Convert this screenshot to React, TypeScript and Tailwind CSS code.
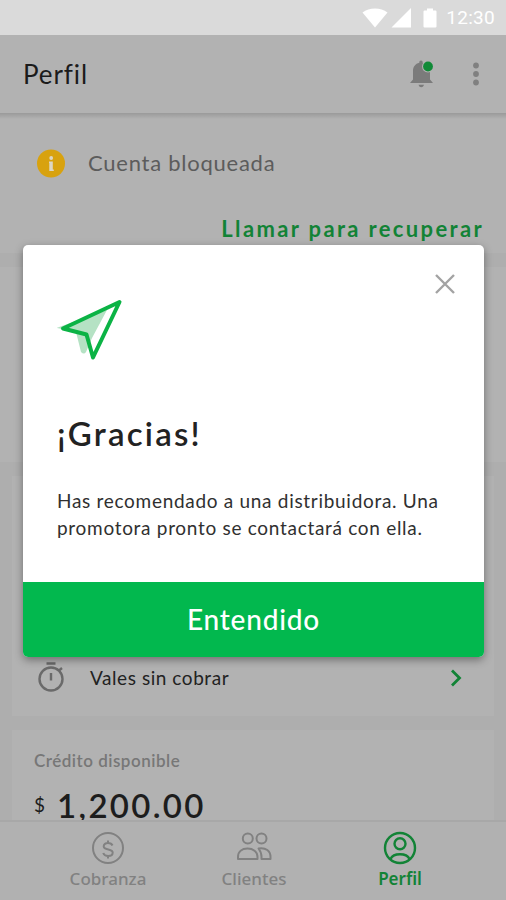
import type { ReactNode } from 'react';

interface NavItemProps {
  icon: ReactNode;
  label: string;
  className: string;
}

function StatusBar() {
  return (
    <div className="flex h-[35px] shrink-0 items-center justify-end bg-[#dadada] pr-[11px] text-white">
      <svg className="mr-[3px] h-[20px] w-[26px]" viewBox="0 0 26 20" fill="currentColor">
        <path d="M0.5 4.5C4 1.7 8.200 0.500 13 0.500S22 1.700 25.500 4.500L13 19.500Z" />
      </svg>
      <svg className="mr-[12px] h-[20px] w-[20px]" viewBox="0 0 20 20" fill="currentColor">
        <path d="M20 0V19.500H0.500Z" />
      </svg>
      <svg className="mr-[9px] h-[20px] w-[14px]" viewBox="0 0 14 20" fill="currentColor">
        <path d="M4 0.500H10V2.500H12.500Q13.500 2.500 13.500 3.500V18.500Q13.500 19.500 12.500 19.500H1.500Q0.500 19.500 0.500 18.500V3.500Q0.500 2.500 1.500 2.500H4Z" />
      </svg>
      <span className="font-['Roboto',sans-serif] text-[19px] leading-none tracking-[0.3px]">12:30</span>
    </div>
  );
}

function Header() {
  return (
    <header className="relative z-10 flex h-[78px] shrink-0 items-center bg-[#b2b2b2] pr-[23px] pl-[23px]">
      <div className="absolute inset-x-0 top-full h-[6px] bg-linear-to-b from-[#9a9a9a] to-[#b2b2b2]" />
      <h1 className="flex-1 text-[26px] leading-none tracking-[0.9px] text-[#1b1b1b]">Perfil</h1>
      <svg className="mr-[34px] h-[30px] w-[26px]" viewBox="0 0 26 30">
        <path
          d="M12 1.500C10.800 1.500 10.300 2.400 10.300 3.700C6.300 4.700 4 7.700 4 12V20.500L1 24H24L21 20.500V12C21 7.700 18 4.700 13.700 3.700C13.700 2.400 13.200 1.500 12 1.500Z"
          fill="#7b7b7b"
        />
        <path d="M9.500 25.800H15C14.500 27.500 13.500 28.300 12.200 28.300S10 27.500 9.500 25.800Z" fill="#7b7b7b" />
        <circle cx="19" cy="7.500" r="6" fill="#b2b2b2" />
        <circle cx="19" cy="7.500" r="4.900" fill="#108a37" />
      </svg>
      <svg className="h-[26px] w-[14px]" viewBox="0 0 14 26" fill="#808080">
        <circle cx="7" cy="4.500" r="2.900" />
        <circle cx="7" cy="13" r="2.900" />
        <circle cx="7" cy="21.500" r="2.900" />
      </svg>
    </header>
  );
}

function BlockedAccount() {
  return (
    <section className="h-[140px] shrink-0 bg-[#b2b2b2] pt-[35px]">
      <div className="flex h-[30px] items-center pl-[36px]">
        <svg className="mr-[22px] h-[30px] w-[30px]" viewBox="0 0 30 30">
          <circle cx="15" cy="15.500" r="14" fill="#d8a20f" />
          <circle cx="15.200" cy="10" r="1.900" fill="#dcd6c4" />
          <path d="M13 13.500H16.800V21.500H17.800V23H13.300V15H13Z" fill="#dcd6c4" />
        </svg>
        <span className="text-[22px] leading-none tracking-[0.75px] text-[#5c5c5c]">Cuenta bloqueada</span>
      </div>
      <div className="mt-[39px] pr-[22px] text-right text-[22px] leading-[24px] font-bold tracking-[2.35px] text-[#128336]">
        Llamar para recuperar
      </div>
    </section>
  );
}

function NavItem({ icon, label, className }: NavItemProps) {
  return (
    <div className={`flex w-[146px] flex-col items-center ${className}`}>
      {icon}
      <span className="mt-[2px] font-['Noto_Sans',sans-serif] text-[17px] leading-[24px]">{label}</span>
    </div>
  );
}

function BottomNav() {
  return (
    <nav className="absolute inset-x-0 bottom-0 flex h-[80px] border-t-2 border-[#a8a8a8] bg-[#b1b1b1] pt-[9px] pl-[35px]">
      <NavItem
        label="Cobranza"
        className="font-medium text-[#818181]"
        icon={
          <svg className="h-[34px] w-[34px]" viewBox="0 0 34 34" fill="none" stroke="currentColor" strokeWidth="2">
            <circle cx="17" cy="17" r="15" />
            <path d="M21.500 14.500C20.800 12.800 19.200 12 17 12C14.500 12 12.700 13.200 12.700 15.200C12.700 19.800 21.700 17.200 21.700 21.500C21.700 23.700 19.700 25 17.200 25C14.700 25 12.900 24 12.200 22M17 9.500V12M17 25V27.500" />
          </svg>
        }
      />
      <NavItem
        label="Clientes"
        className="font-medium text-[#818181]"
        icon={
          <svg className="h-[34px] w-[38px]" viewBox="0 0 38 34" fill="none" stroke="currentColor" strokeWidth="2">
            <circle cx="12.800" cy="7.500" r="5" />
            <circle cx="26.500" cy="7.500" r="5" />
            <path d="M3 28V26C3 20.500 7 17.500 12.500 17.500S22.500 20.500 22.500 26V28Z" strokeLinejoin="round" />
            <path d="M23.500 17.500C31 16.300 35.500 20 35.500 26V28H26.500V26C26.500 22.500 25.500 20 23.500 17.500Z" strokeLinejoin="round" />
          </svg>
        }
      />
      <NavItem
        label="Perfil"
        className="font-semibold text-[#128336]"
        icon={
          <svg className="h-[34px] w-[34px]" viewBox="0 0 34 34" fill="none" stroke="currentColor" strokeWidth="2.400">
            <circle cx="17" cy="17" r="15" />
            <circle cx="17" cy="12.800" r="5.500" />
            <path d="M7.500 28C9 24.800 12.500 23.200 17 23.200S25 24.800 26.500 28" />
          </svg>
        }
      />
    </nav>
  );
}

function ThanksDialog() {
  return (
    <div className="absolute inset-0 z-20 flex items-center pt-[2px] pr-[22px] pl-[23px]">
      <div className="flex h-[412px] w-full flex-col overflow-hidden rounded-[5px] bg-white shadow-[0_3px_8px_rgba(0,0,0,0.38)]">
        <div className="flex flex-1 flex-col pl-[34px]">
          <div className="flex h-[116px] justify-between">
            <svg className="mt-[53px] h-[64px] w-[68px]" viewBox="0 0 68 64">
              <path d="M-0.500 30L50 12L35 40L29 54Q27 57 24 54L19 34Z" fill="#b5e2c4" />
              <path d="M62.500 4L6 30.500L29.500 36.500L36 59.500Z" fill="none" stroke="#0bb345" strokeWidth="4" strokeLinejoin="round" />
            </svg>
            <svg className="mt-[29px] mr-[29px] h-[20px] w-[20px]" viewBox="0 0 20 20" stroke="#a3a3a3" strokeWidth="2.400">
              <path d="M1 1L19 19M19 1L1 19" />
            </svg>
          </div>
          <h2 className="mt-[52px] text-[33px] leading-[40px] font-semibold tracking-[2.200px] text-[#222]">¡Gracias!</h2>
          <p className="mt-[34px] text-[19px] leading-[27px] tracking-[0.700px] whitespace-nowrap text-[#303030]">
            Has recomendado a una distribuidora. Una
            <br />
            promotora pronto se contactará con ella.
          </p>
        </div>
        <button className="h-[75px] bg-[#02b84e] pb-[2px] text-[28px] font-medium tracking-[0.800px] text-white">Entendido</button>
      </div>
    </div>
  );
}

export default function App() {
  return (
    <div className="relative flex h-[900px] w-[506px] flex-col overflow-hidden bg-[#aeaeae] font-['Lato',sans-serif]">
      <StatusBar />
      <Header />
      <BlockedAccount />
      <div className="mt-[14px] h-[195px] shrink-0 bg-[#b2b2b2]" />
      <section className="mx-[12px] mt-[14px] flex h-[240px] shrink-0 items-end bg-[#b2b2b2] pr-[32px] pb-[22px] pl-[24px]">
        <svg className="mr-[24px] mb-px h-[32px] w-[30px]" viewBox="0 0 30 32" fill="none" stroke="#6a6a6a" strokeWidth="2.400">
          <circle cx="15" cy="18" r="11.500" />
          <path d="M10.500 2.500H19.500M15 12V19.500M23 9.500L26 7" />
        </svg>
        <span className="flex-1 text-[19px] leading-[32px] tracking-[0.560px] text-[#222]">Vales sin cobrar</span>
        <svg className="mb-[7px] h-[18px] w-[12px]" viewBox="0 0 12 18" fill="none" stroke="#128336" strokeWidth="2.800">
          <path d="M2 1.500L9.500 9L2 16.500" />
        </svg>
      </section>
      <section className="mx-[12px] mt-[14px] h-[170px] shrink-0 bg-[#b2b2b2] pt-[20px] pl-[22px]">
        <div className="text-[17px] leading-[22px] font-semibold tracking-[0.500px] text-[#777]">Crédito disponible</div>
        <div className="mt-[13px] flex items-center text-[#1d1d1d]">
          <span className="mr-[12px] text-[19px]">$</span>
          <span className="text-[33px] leading-[40px] font-semibold tracking-[2.300px]">1,200.00</span>
        </div>
      </section>
      <BottomNav />
      <ThanksDialog />
    </div>
  );
}
